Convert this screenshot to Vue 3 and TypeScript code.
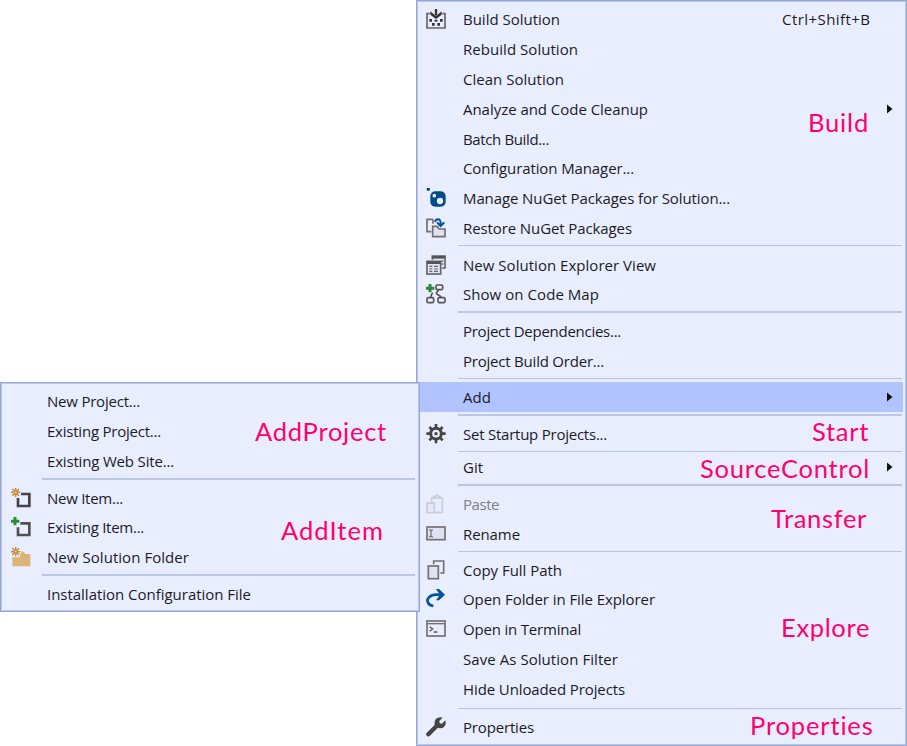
<script setup lang="ts">
import { onMounted, ref } from 'vue'

interface Entry {
  text?: string
  width?: number
  height: number
  icon?: string
  shortcut?: string
  arrow?: boolean
  active?: boolean
  disabled?: boolean
  line?: number
  offset?: number
}
interface Caption {
  text: string
  left: number
  top: number
  width: number
}

const row = (text: string, width: number, icon = '', extra: Partial<Entry> = {}): Entry => ({ text, width, icon, height: 30, ...extra })
const sep = (height: number, line = 1, offset = 2): Entry => ({ height, line, offset })

const mainMenu: Entry[] = [
  row('Build Solution', 97, 'build', { shortcut: 'Ctrl+Shift+B' }),
  row('Rebuild Solution', 115),
  row('Clean Solution', 101),
  row('Analyze and Code Cleanup', 185, '', { arrow: true }),
  row('Batch Build...', 86),
  row('Configuration Manager...', 171, '', { height: 29 }),
  row('Manage NuGet Packages for Solution...', 267, 'nuget'),
  row('Restore NuGet Packages', 169, 'restore'),
  sep(7),
  row('New Solution Explorer View', 193, 'views'),
  row('Show on Code Map', 136, 'map', { height: 29 }),
  sep(7, 2),
  row('Project Dependencies...', 158),
  row('Project Build Order...', 141),
  sep(6),
  row('Add', 28, '', { arrow: true, active: true }),
  sep(7, 2),
  row('Set Startup Projects...', 144, 'gear'),
  sep(4),
  row('Git', 20, '', { height: 29, arrow: true }),
  sep(7, 2),
  row('Paste', 36, 'paste', { disabled: true }),
  row('Rename', 57, 'rename'),
  sep(6),
  row('Copy Full Path', 99, 'copy'),
  row('Open Folder in File Explorer', 192, 'open', { height: 29 }),
  row('Open in Terminal', 118, 'terminal'),
  row('Save As Solution Filter', 155),
  row('Hide Unloaded Projects', 162),
  sep(8, 1, 4),
  row('Properties', 71, 'wrench'),
]

const addMenu: Entry[] = [
  row('New Project...', 93),
  row('Existing Project...', 114),
  row('Existing Web Site...', 127),
  sep(7, 2),
  row('New Item...', 76, 'newitem'),
  row('Existing Item...', 97, 'existing', { height: 29 }),
  row('New Solution Folder', 142, 'folder'),
  sep(7, 2),
  row('Installation Configuration File', 204),
]

const menus = [
  { name: 'main', entries: mainMenu },
  { name: 'sub', entries: addMenu },
]

const captions: Caption[] = [
  { text: 'Build', left: 808, top: 107, width: 61 },
  { text: 'Start', left: 812, top: 416, width: 57 },
  { text: 'SourceControl', left: 700, top: 453, width: 170 },
  { text: 'Transfer', left: 771, top: 503, width: 96 },
  { text: 'Explore', left: 781, top: 612, width: 89 },
  { text: 'Properties', left: 750, top: 710, width: 124 },
  { text: 'AddProject', left: 255, top: 416, width: 132 },
  { text: 'AddItem', left: 281, top: 515, width: 103 },
]

/* Spread each label over its own column width. */
const root = ref<HTMLElement | null>(null)
onMounted(() => {
  root.value?.querySelectorAll<HTMLElement>('[data-width]').forEach((el) => {
    const target = Number(el.dataset.width)
    const length = (el.textContent ?? '').length
    el.style.letterSpacing = `${(target - el.getBoundingClientRect().width) / length}px`
  })
})
</script>

<template>
  <div ref="root" class="stage">
    <div v-for="menu in menus" :key="menu.name" class="menu" :class="menu.name">
      <template v-for="(e, i) in menu.entries" :key="i">
        <div v-if="e.line" class="sep" :style="{ height: e.height + 'px', paddingTop: e.offset + 'px' }">
          <div class="line" :class="{ thick: e.line === 2 }"></div>
        </div>
        <div v-else class="row" :class="{ active: e.active, disabled: e.disabled, short: e.height === 29 }" :style="{ height: e.height + 'px' }">
          <span class="icon">
            <svg v-if="e.icon" viewBox="0 0 60 60" width="20" height="20" fill="none" stroke="#555" stroke-width="5">
              <template v-if="e.icon === 'build'">
                <path d="M11 14H3V57H57V14H49" stroke="#666" />
                <path d="M30 0V19" stroke="#333" stroke-width="7" />
                <path d="M13 7L30 21L47 7V17L30 30L13 17Z" fill="#333" stroke="none" />
                <path d="M10 30h8v8h-8zM26 32h8v6h-8zM42 30h8v8h-8zM18 42h8v8h-8zM34 42h8v8h-8z" fill="#333" stroke="none" />
              </template>
              <template v-else-if="e.icon === 'nuget'">
                <rect x="13" y="10" width="46" height="46" rx="15" fill="#004c87" stroke="none" />
                <circle cx="7" cy="4" r="5" fill="#004c87" stroke="none" />
                <circle cx="25" cy="23" r="5.5" fill="#e9eeff" stroke="none" />
                <circle cx="42" cy="39" r="9.5" fill="#e9eeff" stroke="none" />
              </template>
              <template v-else-if="e.icon === 'restore'">
                <path d="M21 4H3V41H16M21 4V17" stroke="#707070" />
                <path d="M20 26V56H57V33H39L34 25H20Z" fill="#dde1f2" stroke="#707070" />
                <path d="M27 12Q30 3 37 4Q45 5 44 22M33 13L44 24L55 13" stroke="#00529b" stroke-width="6" />
              </template>
              <template v-else-if="e.icon === 'views'">
                <path d="M19 14V3H57V39H48" stroke="#666" />
                <path d="M19 7H58" stroke="#555" stroke-width="8" />
                <path d="M46 18H52M47 27H52" />
                <rect x="3" y="19" width="41" height="38" fill="#e1e5f6" stroke="#666" />
                <path d="M2 23H44" stroke-width="8" />
                <path d="M10 34H19M24 34H36M10 42H19M24 42H36M10 49H19M24 49H36" stroke="#666" stroke-width="3.5" />
              </template>
              <template v-else-if="e.icon === 'map'">
                <path d="M12 0V25M0 13H25" stroke="#2f8a37" stroke-width="9" />
                <rect x="30" y="3" width="20" height="14" rx="4" />
                <path d="M38 18L30 28M20 26Q17 31 14 39M30 28L46 39" />
                <rect x="3" y="41" width="20" height="15" rx="4" />
                <rect x="36" y="41" width="21" height="15" rx="4" />
              </template>
              <template v-else-if="e.icon === 'gear'">
                <circle cx="30" cy="29" r="16" stroke="#444" stroke-width="9" />
                <path d="M30 0V12M30 46V58M1 29H13M47 29H59M10 9L18 17M42 41L50 49M50 9L42 17M18 41L10 49" stroke="#444" stroke-width="8" />
                <circle cx="30" cy="29" r="5" fill="#444" stroke="none" />
              </template>
              <template v-else-if="e.icon === 'paste'">
                <path d="M17 24V12H49V55H28M23 12V8H28Q32 -2 39 8H43V12" stroke="#c8ccdc" />
                <rect x="3" y="27" width="22" height="29" fill="#e4e8f8" stroke="#c8ccdc" />
              </template>
              <template v-else-if="e.icon === 'rename'">
                <rect x="3" y="9" width="54" height="38" fill="#dfe2f4" stroke="#707070" />
                <path d="M9 18H13Q15 18 15 21V36Q15 39 12 39H9M21 18H17Q15 18 15 21M15 36Q15 39 21 39" stroke="#555" stroke-width="3" />
              </template>
              <template v-else-if="e.icon === 'copy'">
                <path d="M23 13V3H53V39H43" stroke="#707070" />
                <rect x="7" y="18" width="30" height="38" fill="#dfe3f4" stroke="#707070" />
              </template>
              <template v-else-if="e.icon === 'open'">
                <path d="M22 51C5 49 0 34 9 25Q17 17 31 17H48" stroke="#00529b" stroke-width="8" />
                <path d="M30 0H39L57 17L39 34H30L42 17Z" fill="#00529b" stroke="none" />
              </template>
              <template v-else-if="e.icon === 'terminal'">
                <rect x="3" y="6" width="54" height="45" stroke="#707070" />
                <path d="M3 14H57" stroke="#707070" stroke-width="4" />
                <path d="M11 23L20 30L11 37M23 39H34" stroke="#555" stroke-width="4" />
              </template>
              <template v-else-if="e.icon === 'wrench'">
                <path d="M7 52L35 24" stroke="#444" stroke-width="13" stroke-linecap="round" />
                <path d="M50 2L40 12L41 19L48 20L58 10Q62 23 54 30Q46 36 36 32L26 23Q24 8 34 3Q42 -1 50 2Z" fill="#444" stroke="none" />
              </template>
              <template v-else-if="e.icon === 'newitem'">
                <path d="M30 18H55V54H21V30" stroke="#444" stroke-width="8" />
                <path d="M14 -1V27M0 13H28M4 3L24 23M24 3L4 23" stroke="#c88938" stroke-width="4.5" />
                <circle cx="14" cy="13" r="4" fill="#f4d9b0" stroke="#c88938" stroke-width="3" />
              </template>
              <template v-else-if="e.icon === 'existing'">
                <path d="M28 19H55V54H21V31" stroke="#505050" stroke-width="8" />
                <path d="M12 0V25M0 13H25" stroke="#2f8a37" stroke-width="9" />
              </template>
              <template v-else-if="e.icon === 'folder'">
                <path d="M4 31H27V22L35 12L43 21H58V58H4Z" fill="#dcb47a" stroke="none" />
                <path d="M14 0V28M0 14H28M4 4L24 24M24 4L4 24" stroke="#c88938" stroke-width="4.5" />
                <circle cx="14" cy="14" r="4" fill="#f4d9b0" stroke="#c88938" stroke-width="3" />
              </template>
            </svg>
          </span>
          <span class="label"><span :data-width="e.width">{{ e.text }}</span></span>
          <span v-if="e.shortcut" class="shortcut"><span data-width="88.5">{{ e.shortcut }}</span></span>
          <svg v-if="e.arrow" class="arrow" viewBox="0 0 6 10" width="6" height="10"><path d="M0 0.5L5.5 5L0 9.5Z" fill="#111" /></svg>
        </div>
      </template>
    </div>
    <span v-for="c in captions" :key="c.text + c.top" class="caption" :data-width="c.width" :style="{ left: c.left + 'px', top: c.top + 'px' }">{{ c.text }}</span>
  </div>
</template>

<style>
body {
  background: #fff;
}
</style>

<style scoped>
.stage {
  position: relative;
  width: 907px;
  height: 746px;
  overflow: hidden;
  font-family: 'Open Sans', 'Noto Sans', sans-serif;
  font-size: 15px;
  color: #1b1b1f;
}
.menu {
  box-sizing: border-box;
  background: #e9eeff;
  border: 1px solid #93a6d6;
  box-shadow: inset 0 0 0 1px #bdc9ec;
  padding: 3px;
}
.main {
  width: 491px;
  height: 746px;
  margin-left: 416px;
}
.sub {
  position: absolute;
  left: 0;
  top: 382px;
  width: 420px;
  height: 230px;
}
.row {
  display: flex;
  align-items: center;
  box-sizing: border-box;
  padding-left: 6px;
}
.short {
  padding-bottom: 1px;
}
.sub .row {
  padding-left: 7px;
}
.active {
  background: #b2c4ff;
}
.disabled {
  color: #7c7e86;
}
.icon {
  display: flex;
  width: 37px;
  height: 20px;
}
.sub .icon {
  width: 36px;
}
.label {
  flex: 1;
  line-height: 20px;
  white-space: nowrap;
}
.shortcut {
  width: 121px;
  line-height: 20px;
  white-space: nowrap;
}
.arrow {
  margin-right: 10px;
  margin-bottom: 1px;
}
.sep {
  box-sizing: border-box;
  padding-left: 38px;
  padding-right: 1px;
}
.line {
  height: 1px;
  background: #b6c3e8;
}
.line.thick {
  height: 2px;
  background: #bac7ea;
}
.caption {
  position: absolute;
  font-family: Lato, sans-serif;
  font-size: 25.5px;
  line-height: 30px;
  color: #ff006e;
  white-space: nowrap;
}
</style>
